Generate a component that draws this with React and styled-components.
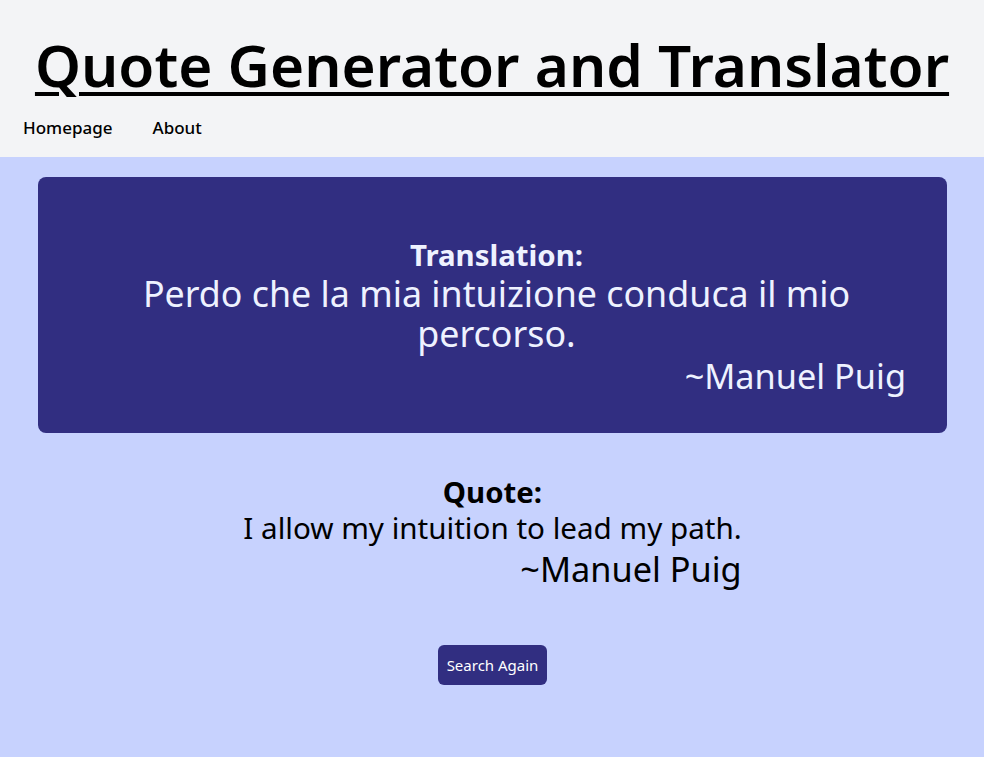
import styled, { createGlobalStyle } from "styled-components";

const GlobalStyle = createGlobalStyle`
  html, body {
    margin: 0;
    padding: 0;
    background: #c7d2fe;
    font-family: "Noto Sans", "Open Sans", sans-serif;
  }
  * {
    box-sizing: border-box;
  }
`;

const Page = styled.div`
  min-height: 757px;
  background: #c7d2fe;
`;

const Header = styled.header`
  background: #f3f4f6;
  padding: 30px 0 0;
  height: 157px;
`;

const Title = styled.h1`
  margin: 0;
  text-align: center;
  font-size: 58.5px;
  line-height: 68px;
  font-weight: 600;
  color: #000;
  text-decoration: underline;
  text-decoration-thickness: 4px;
  text-underline-offset: 5px;
`;

const Nav = styled.nav`
  display: flex;
  gap: 40px;
  padding: 18px 23px 0;
`;

const NavLink = styled.a`
  font-size: 17px;
  font-weight: 500;
  color: #000;
  text-decoration: none;
  cursor: pointer;
`;

const Main = styled.main`
  display: flex;
  flex-direction: column;
  align-items: center;
  padding: 20px 37px 0 38px;
`;

const Card = styled.section`
  width: 100%;
  background: #312e81;
  border-radius: 8px;
  padding: 60px 41px 34px 49px;
  color: #eef2ff;
  text-align: center;
`;

const Block = styled.div`
  display: ${({ $inline }) => ($inline ? "inline-block" : "block")};
  text-align: center;
`;

const Label = styled.div`
  font-weight: 700;
  font-size: 29.4px;
  line-height: 36px;
`;

const Text = styled.div`
  font-size: ${({ $size }) => $size}px;
  line-height: ${({ $lh }) => $lh}px;
`;

const Author = styled.div`
  text-align: right;
  font-size: 34.3px;
  line-height: 46px;
`;

const QuoteArea = styled.section`
  margin-top: 41px;
  color: #000;
`;

const Button = styled.button`
  margin-top: 53px;
  background: #312e81;
  color: #fff;
  border: none;
  border-radius: 6px;
  font-family: inherit;
  font-size: 15px;
  padding: 0 9px;
  height: 40px;
  cursor: pointer;
`;

export default function App() {
  return (
    <Page>
      <GlobalStyle />
      <Header>
        <Title>Quote Generator and Translator</Title>
        <Nav>
          <NavLink>Homepage</NavLink>
          <NavLink>About</NavLink>
        </Nav>
      </Header>
      <Main>
        <Card>
          <Block>
            <Label>Translation:</Label>
            <Text $size={35.8} $lh={40}>
              Perdo che la mia intuizione conduca il mio percorso.
            </Text>
            <Author>~Manuel Puig</Author>
          </Block>
        </Card>
        <QuoteArea>
          <Block $inline>
            <Label>Quote:</Label>
            <Text $size={29.6} $lh={36}>
              I allow my intuition to lead my path.
            </Text>
            <Author>~Manuel Puig</Author>
          </Block>
        </QuoteArea>
        <Button>Search Again</Button>
      </Main>
    </Page>
  );
}
